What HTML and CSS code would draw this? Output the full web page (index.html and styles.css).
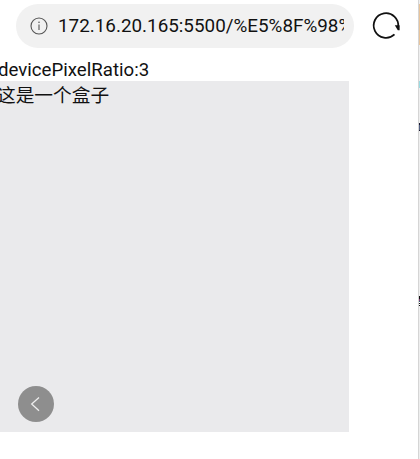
FILE: index.html
```html
<!DOCTYPE html>
<html lang="zh">
<head>
<meta charset="utf-8">
<title>devicePixelRatio</title>
<link rel="stylesheet" href="styles.css">
</head>
<body>
<div class="screen">
  <header class="toolbar">
    <div class="address">
      <svg class="info" viewBox="0 0 18 18"><circle cx="9" cy="9" r="8"/><path d="M9 7.6v5.4"/><circle class="dot" cx="9" cy="5.2" r=".8"/></svg>
      <span class="url">172.16.20.165:5500/%E5%8F%98%</span>
    </div>
    <svg class="reload" viewBox="0 0 30 30"><path d="M23.5 23.4A12.3 12.3 0 1 1 27.2 16"/><path class="tip" d="M23.8 14.3h4.8v5h-1.8z"/></svg>
  </header>
  <main class="page">
    <div class="ratio">devicePixelRatio:3</div>
    <div class="box">这是一个盒子</div>
  </main>
  <button class="back" aria-label="back"><svg viewBox="0 0 36 36"><path d="M21 11.5 13.7 18 21 24.7"/></svg></button>
</div>
<aside class="edge">
  <i class="tan"></i><i class="aqua"></i><i class="navy"></i><i class="marks"></i>
</aside>
</body>
</html>
```
FILE: styles.css
```css
* { box-sizing: border-box; }
body {
  margin: 0;
  display: flex;
  width: 420px;
  height: 459px;
  overflow: hidden;
  background: #fff;
  color: #111;
  font-family: Roboto, "Noto Sans CJK SC", sans-serif;
}
.screen { position: relative; width: 418px; overflow: hidden; }
.toolbar { display: flex; align-items: flex-start; height: 59px; padding: 4px 0 0 16px; }
.address {
  display: flex;
  align-items: center;
  width: 338px;
  height: 44px;
  padding: 0 10px 0 14px;
  border-radius: 22px;
  background: #f1f1f1;
}
.info { flex: none; width: 18px; height: 18px; margin-right: 10px; fill: none; stroke: #555; stroke-width: 1.1; }
.info .dot { fill: #555; stroke: none; }
.url { flex: 1; overflow: hidden; white-space: nowrap; font-size: 18.85px; line-height: 24px; }
.reload { width: 30px; height: 30px; margin: 7px 0 0 17px; fill: none; stroke: #111; stroke-width: 1.8; }
.reload .tip { fill: #111; stroke: none; }
.ratio { height: 22px; margin-left: -2px; font-size: 18.65px; line-height: 22px; white-space: nowrap; }
.box { width: 349px; height: 351px; padding-top: 1px; text-indent: -3px; background: #eaeaec; font-size: 18.7px; line-height: 28px; }
.back {
  position: absolute;
  left: 18px;
  top: 386px;
  width: 36px;
  height: 36px;
  padding: 0;
  border: 0;
  border-radius: 50%;
  background: #8e8e8e;
}
.back svg { display: block; fill: none; stroke: #eee; stroke-width: 1.3; }
.edge { display: flex; flex-direction: column; width: 2px; border-left: 1px solid #d5d5d5; background: #eee; }
.edge i { flex: none; width: 1px; }
.tan { height: 41px; margin-top: 4px; background: #e8c49b; }
.aqua { height: 7px; margin-top: 36px; background: #9bdce3; }
.navy { height: 8px; margin-top: 35px; background: #536083; border-top: 2px solid #181830; border-bottom: 1px solid #181830; }
.marks { height: 10px; margin-top: 165px; background: linear-gradient(#111 0 3px, #843b75 3px 5px, #36667c 5px 6px, #fff 6px 7px, #111 7px 8px, #fff 8px 9px, #111 9px); }
```
